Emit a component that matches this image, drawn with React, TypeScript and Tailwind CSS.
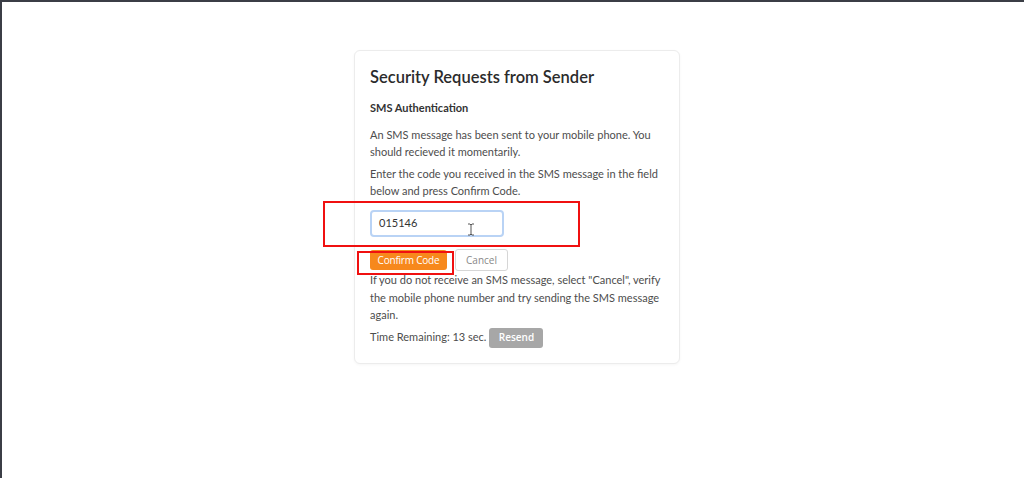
export default function App() {
  return (
    <div className="relative h-[478px] w-[1024px] overflow-hidden border-t-2 border-l-2 border-[#3b3e46] bg-white font-['Lato',sans-serif]">
      <div className="pt-[48px] pl-[352px]">
        <div className="w-[326px] rounded-md border border-[#ececec] bg-white px-[15px] pt-[14px] pb-[15px] shadow-[0_1px_3px_rgba(0,0,0,0.04)]">
          <h2 className="text-[16.5px] leading-[24px] font-semibold text-[#2b2b2b]">Security Requests from Sender</h2>
          <h3 className="mt-[10px] text-[11px] leading-[17px] font-bold text-[#333]">SMS Authentication</h3>
          <p className="mt-[10px] text-[11px] leading-[17px] text-[#4d4d4d]">
            An SMS message has been sent to your mobile phone. You should recieved it momentarily.
          </p>
          <p className="mt-[5px] text-[11px] leading-[17px] text-[#4d4d4d]">
            Enter the code you received in the SMS message in the field below and press Confirm Code.
          </p>
          <div className="mt-[11px] flex h-[27px] w-[134px] items-center rounded-[4px] border-2 border-[#b9d3f5] bg-white px-[7px] text-[11px] text-[#333]">
            015146
          </div>
          <div className="mt-[12px] flex items-center gap-[8px]">
            <button className="h-[20px] w-[77px] rounded-[3px] bg-[#f7881c] text-[10px] font-medium text-white font-['Open_Sans',sans-serif] tracking-[-0.2px]">
              Confirm Code
            </button>
            <button className="h-[22px] w-[53px] rounded-[3px] border border-[#d6d6d6] bg-white text-[10px] text-[#888] font-['Open_Sans',sans-serif]">
              Cancel
            </button>
          </div>
          <p className="mt-0 text-[11px] leading-[17.5px] text-[#4d4d4d]">
            If you do not receive an SMS message, select "Cancel", verify the mobile phone number and try sending the SMS message again.
          </p>
          <div className="mt-[4px] flex items-center gap-[3px] text-[11px] text-[#4d4d4d]">
            <span>Time Remaining: 13 sec.</span>
            <button className="h-[20px] w-[54px] rounded-[3px] bg-[#a7a7a7] text-[10px] font-semibold text-white font-['Open_Sans',sans-serif]">
              Resend
            </button>
          </div>
        </div>
      </div>

      {/* annotation boxes */}
      <div className="absolute left-[321px] top-[199px] h-[46px] w-[257px] border-2 border-[#f01010]" />
      <div className="absolute left-[355px] top-[249px] h-[24px] w-[97px] border-2 border-[#f01010]" />
      {/* text cursor */}
      <svg className="absolute left-[465px] top-[221px]" width="8" height="13" viewBox="0 0 8 13">
        <path d="M1 1h2l1 1 1-1h2M4 2v9M1 12h2l1-1 1 1h2" stroke="#555" strokeWidth="1" fill="none" />
      </svg>
    </div>
  );
}
